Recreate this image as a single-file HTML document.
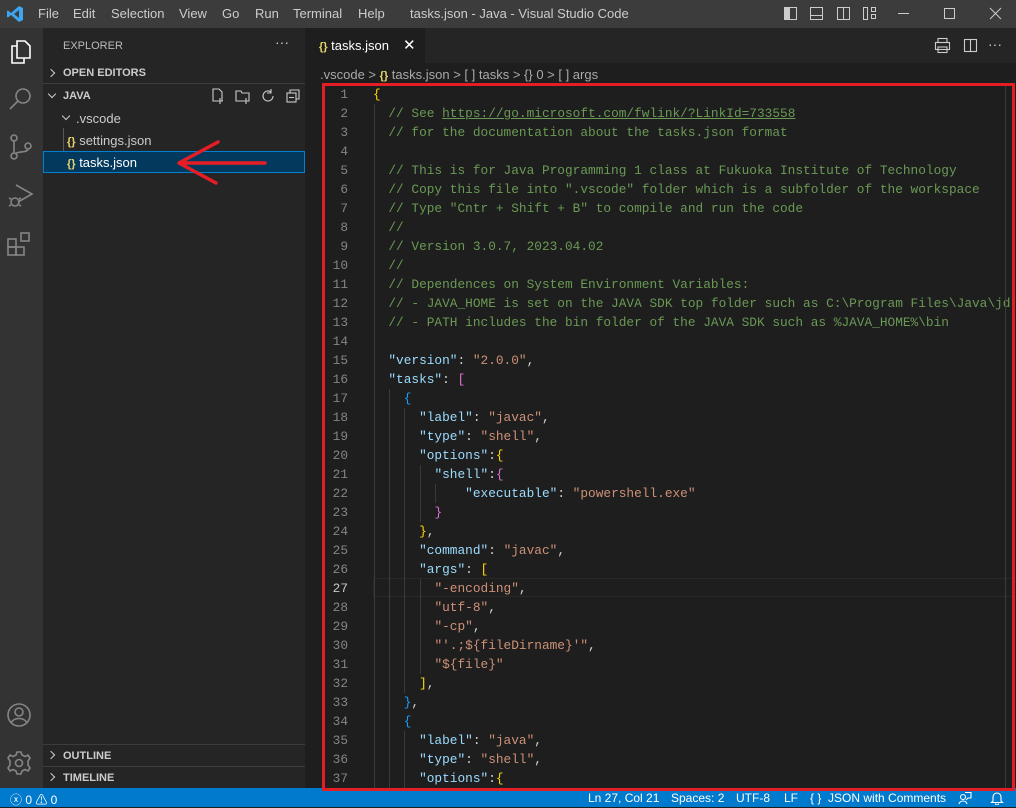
<!DOCTYPE html>
<html><head><meta charset="utf-8"><style>
*{margin:0;padding:0;box-sizing:border-box}
body{width:1016px;height:807px;overflow:hidden;background:#1e1e1e;font-family:"Liberation Sans",sans-serif;position:relative;color:#ccc}
.abs{position:absolute}
#title{left:0;top:0;width:1016px;height:28px;background:#3c3c3c;font-size:13px;color:#ccc}
#title span{position:absolute;top:6px}
#act{left:0;top:28px;width:43px;height:760px;background:#333}
#side{left:43px;top:28px;width:262px;height:760px;background:#252526;font-size:13px}
#tabs{left:305px;top:28px;width:711px;height:35px;background:#252526}
#tab{left:305px;top:28px;width:120px;height:35px;background:#1e1e1e;font-size:13px;color:#fff}
#bc{left:305px;top:63px;width:711px;height:22px;font-size:13px;color:#a9a9a9}
#status{left:0;top:788px;width:1016px;height:19px;background:#007acc;color:#fff;font-size:12px}
#status span{position:absolute;top:3px}
.code{position:absolute;left:373px;font-family:"Liberation Mono",monospace;font-size:12.8px;line-height:19px;height:19px;white-space:pre;color:#d4d4d4}
.ln{position:absolute;left:320px;width:28px;text-align:right;font-family:"Liberation Mono",monospace;font-size:12.8px;line-height:19px;color:#858585}
.c{color:#6a9955}.k{color:#9cdcfe}.s{color:#ce9178}.g{color:#ffd700}.p{color:#da70d6}.b{color:#179fff}
.y{color:#e8d76c}
.guide{position:absolute;width:1px;background:#3a3a3a}
.chev{position:absolute;width:6px;height:6px;border-right:1.3px solid #ccc;border-bottom:1.3px solid #ccc}
</style></head><body>
<div id="title" class="abs">
<svg class="abs" style="left:6px;top:5px" width="18" height="18" viewBox="0 0 18 18"><path d="M13 1 L17 3 V15 L13 17 L5 10 L2 12.5 L1 12 V6 L2 5.5 L5 8 Z M13 5 L8 9 L13 13 Z" fill="#3ea6f0"/></svg>
<span style="left:38px">File</span><span style="left:73px">Edit</span><span style="left:111px">Selection</span><span style="left:179px">View</span><span style="left:222px">Go</span><span style="left:255px">Run</span><span style="left:293px">Terminal</span><span style="left:358px">Help</span>
<span style="left:410px">tasks.json - Java - Visual Studio Code</span>
<svg class="abs" style="left:783px;top:6px" width="110" height="16" fill="none" stroke="#ccc" stroke-width="1"><rect x="1.5" y="1.5" width="12" height="12"/><rect x="1.5" y="1.5" width="5" height="12" fill="#ccc"/><rect x="27.5" y="1.5" width="12" height="12"/><line x1="27" y1="9.5" x2="40" y2="9.5"/><rect x="54.5" y="1.5" width="12" height="12"/><line x1="60.5" y1="1" x2="60.5" y2="14"/><rect x="80.5" y="1.5" width="4" height="12"/><rect x="88.5" y="1.5" width="4" height="4"/><rect x="88.5" y="8.5" width="4" height="4"/></svg>
<div class="abs" style="left:898px;top:13px;width:11px;height:1px;background:#ccc"></div>
<div class="abs" style="left:944px;top:8px;width:11px;height:11px;border:1px solid #ccc"></div>
<svg class="abs" style="left:989px;top:7px" width="13" height="13" stroke="#ccc"><line x1="1" y1="1" x2="12" y2="12"/><line x1="12" y1="1" x2="1" y2="12"/></svg>
</div>
<div id="act" class="abs">
<svg class="abs" style="left:7px;top:10px" width="28" height="28" fill="none" stroke="#fff" stroke-width="1.6"><path d="M10 3 H18 L23 8 V20 H10 Z"/><path d="M10 8 H5 V25 H17 V20"/></svg>
<svg class="abs" style="left:7px;top:57px" width="28" height="28" fill="none" stroke="#858585" stroke-width="1.6"><circle cx="16" cy="11" r="7"/><line x1="11" y1="16" x2="3" y2="24"/></svg>
<svg class="abs" style="left:7px;top:105px" width="28" height="28" fill="none" stroke="#858585" stroke-width="1.6"><circle cx="7" cy="5" r="3"/><circle cx="7" cy="23" r="3"/><circle cx="21" cy="13" r="3"/><line x1="7" y1="8" x2="7" y2="20"/><path d="M21 16 C21 20 10 18 8 21"/></svg>
<svg class="abs" style="left:6px;top:153px" width="28" height="30" fill="none" stroke="#858585" stroke-width="1.6"><path d="M10 4 L26 13 L12 21"/><circle cx="9" cy="21" r="4"/><path d="M3 17 L5 18 M3 25 L5 24 M15 17 L13 18 M15 25 L13 24"/></svg>
<svg class="abs" style="left:6px;top:202px" width="28" height="28" fill="none" stroke="#858585" stroke-width="1.6"><rect x="2" y="9" width="8" height="8"/><rect x="10" y="17" width="8" height="8"/><rect x="2" y="17" width="8" height="8"/><rect x="15" y="3" width="8" height="8"/></svg>
<svg class="abs" style="left:6px;top:674px" width="28" height="28" fill="none" stroke="#858585" stroke-width="1.6"><circle cx="13" cy="13" r="11"/><circle cx="13" cy="10" r="4"/><path d="M5 21 C8 15 18 15 21 21"/></svg>
<svg class="abs" style="left:6px;top:722px" width="28" height="28" fill="none" stroke="#858585" stroke-width="1.6"><circle cx="13" cy="13" r="3.5"/><path d="M11 2 H15 L16 5 L19 6.5 L22 5 L24 8 L22 11 L22 15 L24 18 L22 21 L19 19.5 L16 21 L15 24 H11 L10 21 L7 19.5 L4 21 L2 18 L4 15 L4 11 L2 8 L4 5 L7 6.5 L10 5 Z"/></svg>
</div>
<div id="side" class="abs">
<div class="abs" style="left:20px;top:12px;font-size:11px;color:#bbb">EXPLORER</div>
<div class="abs" style="left:232px;top:6px;color:#ccc;font-size:14px">···</div>
<div class="chev" style="left:5px;top:42px;transform:rotate(-45deg)"></div>
<div class="abs" style="left:20px;top:39px;font-size:11px;font-weight:bold;color:#ccc">OPEN EDITORS</div>
<div class="abs" style="left:0;top:55px;width:262px;height:1px;background:#3c3c3c"></div>
<div class="chev" style="left:6px;top:63px;transform:rotate(45deg)"></div>
<div class="abs" style="left:20px;top:62px;font-size:11px;font-weight:bold;color:#ccc">JAVA</div>
<svg class="abs" style="left:168px;top:60px" width="90" height="18" fill="none" stroke="#ccc" stroke-width="1.1"><path d="M2 1 H8 L11 4 V13 H2 Z M9 10 V16 M6 13 H12"/><path d="M25 3 H30 L31 5 H38 V13 H25 Z M35 10 V16 M32 13 H38"/><path d="M60 4 A5 5 0 1 0 62 8 M60 1 V5 H56"/><rect x="76" y="5" width="9" height="9"/><path d="M79 5 V2 H88 V11 H85 M78 9.5 H83"/></svg>
<div class="chev" style="left:20px;top:85px;transform:rotate(45deg)"></div>
<div class="abs" style="left:33px;top:83px;color:#ccc">.vscode</div>
<div class="abs" style="left:20px;top:100px;width:1px;height:44px;background:#585858"></div>
<div class="abs" style="left:24px;top:105px"><b class="y" style="font-size:11px">{}</b> <span style="color:#ccc">settings.json</span></div>
<div class="abs" style="left:0;top:123px;width:262px;height:22px;background:#04395e;border:1px solid #007fd4"></div>
<div class="abs" style="left:24px;top:127px"><b class="y" style="font-size:11px">{}</b> <span style="color:#fff">tasks.json</span></div>
<svg class="abs" style="left:130px;top:110px" width="100" height="50" fill="none" stroke="#e51e25" stroke-width="3.5" stroke-linecap="round"><path d="M92 25 H6 M6 25 L45 4 M6 25 L43 45"/></svg>
<div class="abs" style="left:0;top:716px;width:262px;height:1px;background:#3c3c3c"></div>
<div class="chev" style="left:5px;top:724px;transform:rotate(-45deg)"></div>
<div class="abs" style="left:20px;top:722px;font-size:11px;font-weight:bold;color:#ccc">OUTLINE</div>
<div class="abs" style="left:0;top:738px;width:262px;height:1px;background:#3c3c3c"></div>
<div class="chev" style="left:5px;top:746px;transform:rotate(-45deg)"></div>
<div class="abs" style="left:20px;top:744px;font-size:11px;font-weight:bold;color:#ccc">TIMELINE</div>
</div>
<div id="tabs" class="abs"></div>
<div id="tab" class="abs"><span class="abs" style="left:14px;top:10px"><b class="y" style="font-size:11px">{}</b> tasks.json</span><span class="abs" style="left:98px;top:8px;font-size:15px">✕</span></div>
<svg class="abs" style="left:934px;top:37px" width="70" height="18" fill="none" stroke="#ccc" stroke-width="1.1"><rect x="4" y="1.5" width="9" height="4"/><rect x="1.5" y="5.5" width="14" height="7"/><rect x="4" y="10" width="9" height="5.5"/><rect x="30.5" y="2.5" width="12" height="12"/><line x1="36.5" y1="2" x2="36.5" y2="15"/></svg>
<div class="abs" style="left:988px;top:36px;color:#ccc;font-size:14px">···</div>
<div id="bc" class="abs"><span class="abs" style="left:15px;top:4px">.vscode &gt; <b class="y" style="font-size:11px">{}</b> tasks.json &gt; [ ] tasks &gt; {} 0 &gt; [ ] args</span></div>
<div class="abs" style="left:373px;top:578px;width:640px;height:19px;border:1px solid #282828"></div>
<div class="guide" style="left:374px;top:104px;height:684px"></div>
<div class="guide" style="left:389px;top:389px;height:399px"></div>
<div class="guide" style="left:404px;top:408px;height:285px"></div>
<div class="guide" style="left:404px;top:731px;height:57px"></div>
<div class="guide" style="left:420px;top:465px;height:57px"></div>
<div class="guide" style="left:435px;top:484px;height:19px"></div>
<div class="guide" style="left:420px;top:579px;height:95px"></div>
<div id="lines"></div>
<script>
const L=[
'<span class=g>{</span>',
'  <span class=c>// See <u>https://go.microsoft.com/fwlink/?LinkId=733558</u></span>',
'  <span class=c>// for the documentation about the tasks.json format</span>',
'',
'  <span class=c>// This is for Java Programming 1 class at Fukuoka Institute of Technology</span>',
'  <span class=c>// Copy this file into ".vscode" folder which is a subfolder of the workspace</span>',
'  <span class=c>// Type "Cntr + Shift + B" to compile and run the code</span>',
'  <span class=c>//</span>',
'  <span class=c>// Version 3.0.7, 2023.04.02</span>',
'  <span class=c>//</span>',
'  <span class=c>// Dependences on System Environment Variables:</span>',
'  <span class=c>// - JAVA_HOME is set on the JAVA SDK top folder such as C:\\Program Files\\Java\\jd</span>',
'  <span class=c>// - PATH includes the bin folder of the JAVA SDK such as %JAVA_HOME%\\bin</span>',
'',
'  <span class=k>"version"</span>: <span class=s>"2.0.0"</span>,',
'  <span class=k>"tasks"</span>: <span class=p>[</span>',
'    <span class=b>{</span>',
'      <span class=k>"label"</span>: <span class=s>"javac"</span>,',
'      <span class=k>"type"</span>: <span class=s>"shell"</span>,',
'      <span class=k>"options"</span>:<span class=g>{</span>',
'        <span class=k>"shell"</span>:<span class=p>{</span>',
'            <span class=k>"executable"</span>: <span class=s>"powershell.exe"</span>',
'        <span class=p>}</span>',
'      <span class=g>}</span>,',
'      <span class=k>"command"</span>: <span class=s>"javac"</span>,',
'      <span class=k>"args"</span>: <span class=g>[</span>',
'        <span class=s>"-encoding"</span>,',
'        <span class=s>"utf-8"</span>,',
'        <span class=s>"-cp"</span>,',
'        <span class=s>"\'.;${fileDirname}\'"</span>,',
'        <span class=s>"${file}"</span>',
'      <span class=g>]</span>,',
'    <span class=b>}</span>,',
'    <span class=b>{</span>',
'      <span class=k>"label"</span>: <span class=s>"java"</span>,',
'      <span class=k>"type"</span>: <span class=s>"shell"</span>,',
'      <span class=k>"options"</span>:<span class=g>{</span>'];
let h='';
L.forEach((t,i)=>{const top=85+i*19;h+=`<div class="ln" style="top:${top}px;${i==26?'color:#c6c6c6':''}">${i+1}</div><div class="code" style="top:${top}px">${t}</div>`});
document.getElementById('lines').innerHTML=h;
</script>
<div class="abs" style="left:1005px;top:85px;width:1px;height:703px;background:#3a3a3a"></div>
<div id="status" class="abs">
<span style="left:10px">ⓧ 0 ⚠ 0</span>
<span style="left:588px">Ln 27, Col 21</span><span style="left:671px">Spaces: 2</span><span style="left:736px">UTF-8</span><span style="left:784px">LF</span><span style="left:810px">{ }&nbsp; JSON with Comments</span>
<svg class="abs" style="left:958px;top:3px" width="14" height="14" fill="none" stroke="#fff" stroke-width="1.1"><circle cx="5" cy="6" r="2.5"/><path d="M1 13 C2 9 8 9 9 13 M7 1.5 H13 V7 H10 L8 9"/></svg>
<svg class="abs" style="left:990px;top:3px" width="14" height="14" fill="none" stroke="#fff" stroke-width="1.1"><path d="M3 10 V6 A4 4 0 0 1 11 6 V10 L12.5 11.5 H1.5 Z M5.5 12.5 A1.5 1.5 0 0 0 8.5 12.5"/></svg>
</div>
<div class="abs" style="left:322px;top:83px;width:693px;height:708px;border:3px solid #e51e25"></div>
</body></html>
